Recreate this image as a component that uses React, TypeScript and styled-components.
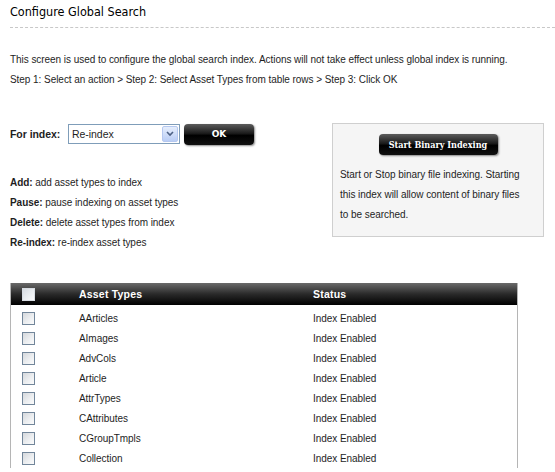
import React from "react";
import styled, { createGlobalStyle } from "styled-components";

const GlobalStyle = createGlobalStyle`
  html, body { margin: 0; padding: 0; background: #fff; }
  body {
    font-family: "Liberation Sans", Arial, sans-serif;
    font-size: 10px;
    letter-spacing: -0.05px;
    color: #1e1e1e;
  }
`;

const Page = styled.div`
  width: 555px;
  height: 472px;
  overflow: hidden;
  padding: 0 0 0 10px;
  box-sizing: border-box;
`;

const Title = styled.h1`
  margin: 0;
  padding-top: 4px;
  height: 23px;
  font-family: "DejaVu Sans Condensed", "DejaVu Sans", sans-serif;
  font-size: 12.5px;
  letter-spacing: 0;
  font-weight: normal;
  line-height: 16px;
  color: #000;
  border-bottom: 1px dashed #c8c8c8;
`;

const Intro = styled.div`
  margin-top: 22px;
  line-height: 20px;
  white-space: nowrap;
`;

const Controls = styled.div`
  display: grid;
  grid-template-columns: 322px 212px;
  margin-top: 33px;
  align-items: start;
`;

const LeftCol = styled.div`
  padding-top: 1px;
`;

const FormRow = styled.div`
  display: flex;
  align-items: center;
  height: 20px;
`;

const Label = styled.b`
  font-weight: bold;
  font-size: 10.5px;
  min-width: 58px;
`;

const Select = styled.div`
  display: flex;
  width: 112px;
  height: 20px;
  box-sizing: border-box;
  border: 1px solid #7f9db9;
  background: #fff;
  align-items: center;
`;

const SelectText = styled.span`
  flex: 1;
  padding-left: 3px;
  font-size: 10.5px;
`;

const SelectArrow = styled.span`
  width: 16px;
  height: 16px;
  margin-right: 1px;
  display: flex;
  align-items: center;
  justify-content: center;
  background: linear-gradient(#e6eefc, #b9cdf5);
  border: 1px solid #b5c8f0;
  box-sizing: border-box;
  border-radius: 2px;
`;

const BlackButton = styled.button<{ $w: number; $h: number }>`
  width: ${(p) => p.$w}px;
  height: ${(p) => p.$h}px;
  border: none;
  border-radius: 4px;
  background: linear-gradient(#5c5c5c 0%, #1b1b1b 45%, #000 55%, #111 100%);
  box-shadow: 1px 1px 2px rgba(0, 0, 0, 0.45);
  color: #fff;
  font-family: "DejaVu Serif Condensed", "DejaVu Serif", serif;
  font-weight: bold;
  font-size: 9px;
  letter-spacing: 0;
  padding: 0;
  cursor: pointer;
`;

const OkButton = styled(BlackButton)`
  margin-left: 4px;
  font-family: "DejaVu Sans", sans-serif;
`;

const Definitions = styled.div`
  margin-top: 29px;
  line-height: 20px;
`;

const InfoBox = styled.div`
  border: 1px solid #cfcfcf;
  background: #f5f5f5;
  padding: 10px 7px 9px 7px;
  display: flex;
  flex-direction: column;
  align-items: stretch;
  height: 114px;
  box-sizing: border-box;
`;

const ButtonWrap = styled.div`
  display: flex;
  justify-content: center;
`;

const InfoText = styled.div`
  margin-top: 10px;
  line-height: 20px;
  white-space: nowrap;
`;

const Table = styled.table`
  margin-top: 30px;
  width: 508px;
  border-collapse: collapse;
  border-left: 1px solid #b5b5b5;
  border-right: 1px solid #b5b5b5;
`;

const HeadRow = styled.tr`
  height: 22px;
  background: linear-gradient(#6a6a6a 0%, #2a2a2a 50%, #000 100%);
`;

const Th = styled.th<{ $w?: number; $pl?: number }>`
  text-align: left;
  color: #fff;
  font-weight: bold;
  font-size: 10.5px;
  letter-spacing: 0.2px;
  padding: 0 0 0 ${(p) => p.$pl ?? 0}px;
  width: ${(p) => (p.$w ? `${p.$w}px` : "auto")};
`;

const Row = styled.tr<{ $first?: boolean }>`
  height: ${(p) => (p.$first ? 23 : 20)}px;
  td { padding-top: ${(p) => (p.$first ? 3 : 0)}px; }
`;

const Td = styled.td<{ $pl?: number }>`
  padding: 0 0 0 ${(p) => p.$pl ?? 0}px;
  vertical-align: middle;
`;

const Check = styled.span`
  display: block;
  width: 11px;
  height: 11px;
  border: 1px solid #72869a;
  background: linear-gradient(135deg, #d5d8dc 0%, #eef0f2 60%, #fbfbfb 100%);
`;

const HeadCheck = styled(Check)`
  border: 1px solid #d8dde3;
  background: linear-gradient(135deg, #d7dce2 0%, #fbfcfd 100%);
`;

const assetTypes = [
  "AArticles",
  "AImages",
  "AdvCols",
  "Article",
  "AttrTypes",
  "CAttributes",
  "CGroupTmpls",
  "Collection",
];

export default function App() {
  return (
    <>
      <GlobalStyle />
      <Page>
        <Title>Configure Global Search</Title>
        <Intro>
          <div>
            This screen is used to configure the global search index. Actions will not take effect unless global index is running.
          </div>
          <div>Step 1: Select an action &gt; Step 2: Select Asset Types from table rows &gt; Step 3: Click OK</div>
        </Intro>
        <Controls>
          <LeftCol>
            <FormRow>
              <Label>For index:</Label>
              <Select>
                <SelectText>Re-index</SelectText>
                <SelectArrow>
                  <svg width="8" height="6" viewBox="0 0 8 6">
                    <path d="M1 1 L4 4 L7 1" fill="none" stroke="#4d6185" strokeWidth="1.6" />
                  </svg>
                </SelectArrow>
              </Select>
              <OkButton $w={70} $h={21}>OK</OkButton>
            </FormRow>
            <Definitions>
              <div><b>Add:</b> add asset types to index</div>
              <div><b>Pause:</b> pause indexing on asset types</div>
              <div><b>Delete:</b> delete asset types from index</div>
              <div><b>Re-index:</b> re-index asset types</div>
            </Definitions>
          </LeftCol>
          <InfoBox>
            <ButtonWrap>
              <BlackButton $w={119} $h={21}>Start Binary Indexing</BlackButton>
            </ButtonWrap>
            <InfoText>
              Start or Stop binary file indexing. Starting
              <br />
              this index will allow content of binary files
              <br />
              to be searched.
            </InfoText>
          </InfoBox>
        </Controls>
        <Table>
          <thead>
            <HeadRow>
              <Th $w={57} $pl={11}>
                <HeadCheck />
              </Th>
              <Th $w={234}>Asset Types</Th>
              <Th>Status</Th>
            </HeadRow>
          </thead>
          <tbody>
            {assetTypes.map((a, i) => (
              <Row key={a} $first={i === 0}>
                <Td $pl={11}>
                  <Check />
                </Td>
                <Td>{a}</Td>
                <Td>Index Enabled</Td>
              </Row>
            ))}
          </tbody>
        </Table>
      </Page>
    </>
  );
}
